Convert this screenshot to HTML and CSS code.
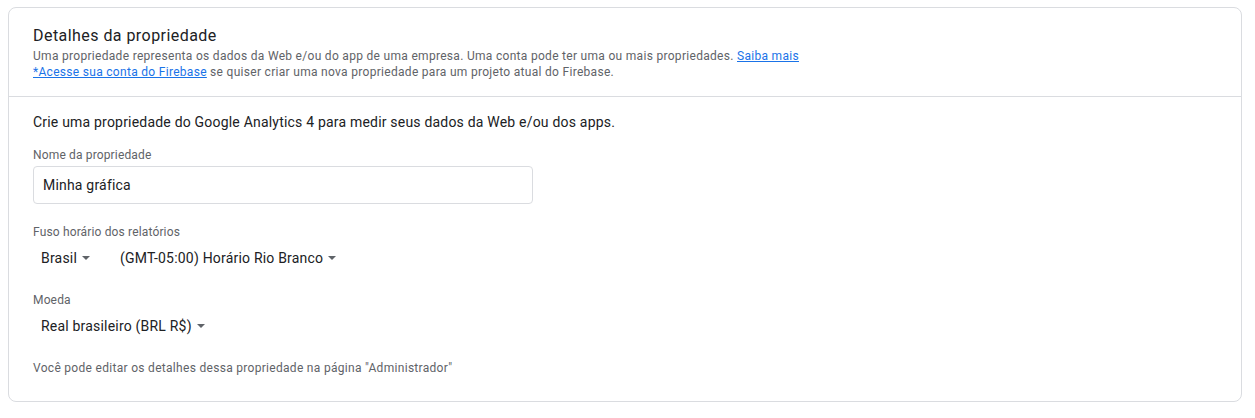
FILE: index.html
```html
<!DOCTYPE html>
<html lang="pt-BR">
<head>
<meta charset="utf-8">
<link rel="stylesheet" href="styles.css">
</head>
<body>
<section class="card">
  <header class="card-head">
    <h2 class="title">Detalhes da propriedade</h2>
    <p class="sub">Uma propriedade representa os dados da Web e/ou do app de uma empresa. Uma conta pode ter uma ou mais propriedades. <a href="#">Saiba mais</a></p>
    <p class="sub"><a href="#">*Acesse sua conta do Firebase</a> se quiser criar uma nova propriedade para um projeto atual do Firebase.</p>
  </header>
  <div class="card-body">
    <p class="intro">Crie uma propriedade do Google Analytics 4 para medir seus dados da Web e/ou dos apps.</p>
    <div class="field">
      <label class="label">Nome da propriedade</label>
      <div class="input">Minha gráfica</div>
    </div>
    <div class="field">
      <div class="label">Fuso horário dos relatórios</div>
      <div class="selects">
        <span class="select">Brasil<span class="caret"></span></span>
        <span class="select">(GMT-05:00) Horário Rio Branco<span class="caret"></span></span>
      </div>
    </div>
    <div class="field">
      <div class="label">Moeda</div>
      <div class="selects">
        <span class="select">Real brasileiro (BRL R$)<span class="caret"></span></span>
      </div>
    </div>
    <p class="note">Você pode editar os detalhes dessa propriedade na página "Administrador"</p>
  </div>
</section>
</body>
</html>
```
FILE: styles.css
```css
* { box-sizing: border-box; }
html, body { margin: 0; background: #fff; }
body {
  padding: 7px 13px 0 8px;
  font-family: Roboto, "Liberation Sans", Arial, sans-serif;
  color: #202124;
}
.card {
  border: 1px solid #dadce0;
  border-radius: 8px;
  background: #fff;
}
.card-head {
  padding: 16px 24px 16px;
  border-bottom: 1px solid #dadce0;
}
.title {
  margin: 0;
  font-size: 16px;
  line-height: 24px;
  font-weight: 400;
  color: #202124;
  letter-spacing: 0.45px;
}
.sub {
  margin: 0;
  font-size: 12px;
  line-height: 16px;
  color: #5f6368;
  letter-spacing: 0.3px;
}
.sub a {
  color: #1a73e8;
  text-decoration: underline;
}
.card-body {
  padding: 15px 24px 25px;
}
.intro {
  margin: 0;
  font-size: 14px;
  line-height: 20px;
  color: #202124;
  letter-spacing: 0.2px;
}
.field { margin-top: 15px; }
.field + .field { margin-top: 20px; }
.field + .field + .field { margin-top: 24px; }
.label {
  display: block;
  font-size: 12px;
  line-height: 16px;
  color: #5f6368;
  letter-spacing: 0.15px;
}
.input {
  margin-top: 3px;
  width: 500px;
  height: 38px;
  border: 1px solid #dadce0;
  border-radius: 4px;
  padding: 0 9px;
  display: flex;
  align-items: center;
  font-size: 14px;
  color: #202124;
  letter-spacing: 0.2px;
}
.selects {
  margin-top: 8px;
  display: flex;
  gap: 14px;
}
.select {
  display: inline-flex;
  align-items: center;
  padding: 0 8px;
  font-size: 14px;
  line-height: 20px;
  color: #202124;
  letter-spacing: 0.2px;
}
.caret {
  margin-left: 5px;
  width: 0;
  height: 0;
  border-left: 4px solid transparent;
  border-right: 4px solid transparent;
  border-top: 4px solid #5f6368;
}
.note {
  margin: 24px 0 0;
  font-size: 12px;
  line-height: 16px;
  color: #5f6368;
  letter-spacing: 0.3px;
}
```
